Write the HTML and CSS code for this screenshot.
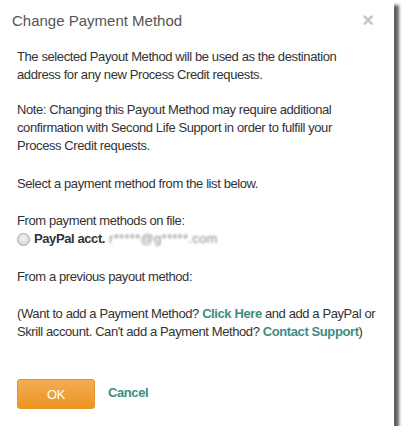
FILE: index.html
```html
<!DOCTYPE html>
<html>
<head>
<meta charset="utf-8">
<link rel="stylesheet" href="styles.css">
</head>
<body>
<div class="dialog">
  <div class="header">
    <div class="title">Change Payment Method</div>
    <div class="close">×</div>
  </div>
  <div class="content">
    <p class="p1">The selected Payout Method will be used as the destination address for any new Process Credit requests.</p>
    <p class="p2">Note: Changing this Payout Method may require additional confirmation with Second Life Support in order to fulfill your Process Credit requests.</p>
    <p class="p3">Select a payment method from the list below.</p>
    <div class="group">
      <div class="line">From payment methods on file:</div>
      <label class="option"><span class="radio"></span><b>PayPal acct.</b> <span class="blur">r*****@g*****.com</span></label>
    </div>
    <p class="p4">From a previous payout method:</p>
    <p class="p5">(Want to add a Payment Method? <a class="link">Click Here</a> and add a PayPal or Skrill account. Can't add a Payment Method? <a class="link">Contact Support</a>)</p>
  </div>
  <div class="footer">
    <div class="btn">OK</div>
    <a class="cancel">Cancel</a>
  </div>
</div>
</body>
</html>
```
FILE: styles.css
```css
html, body {
  margin: 0;
  padding: 0;
  background: #fff;
}
body {
  font-family: "Liberation Sans", Arial, sans-serif;
  color: #333;
}
.dialog {
  width: 394px;
  height: 426px;
  background: #fff;
  box-shadow: 5px 5px 3px rgba(0, 0, 0, 0.62);
  display: flex;
  flex-direction: column;
  box-sizing: border-box;
}
.header {
  display: flex;
  justify-content: space-between;
  align-items: flex-start;
  padding: 10px 20px 0 12px;
}
.title {
  font-size: 15px;
  line-height: 22px;
  color: #555;
}
.close {
  font-size: 20px;
  font-weight: bold;
  line-height: 22px;
  color: #c4c4c4;
  margin-top: -1px;
}
.content {
  padding: 16px 16px 0 17px;
  font-size: 13px;
  line-height: 18px;
  letter-spacing: -0.4px;
}
.content p {
  margin: 0;
}
.p1 {
  margin-bottom: 17px !important;
}
.p2 {
  margin-bottom: 20px !important;
}
.p3 {
  margin-bottom: 19px !important;
}
.group {
  margin-bottom: 20px;
}
.p4 {
  margin-bottom: 19px !important;
}
.option {
  display: flex;
  align-items: center;
  height: 18px;
}
.option b {
  font-weight: bold;
  margin-left: 4px;
  margin-right: 4px;
}
.radio {
  width: 11px;
  height: 11px;
  border-radius: 50%;
  border: 1px solid #a5a5a5;
  background: radial-gradient(circle at 50% 40%, #f4f4f4 0%, #dedede 60%, #cfcfcf 100%);
}
.blur {
  color: #8a8a8a;
  filter: blur(1.3px);
  font-size: 13px;
  letter-spacing: 0.3px;
}
.link {
  color: #3d8c80;
  font-weight: bold;
}
.footer {
  margin-top: auto;
  display: flex;
  align-items: center;
  padding: 0 0 17px 17px;
}
.btn {
  width: 78px;
  height: 30px;
  box-sizing: border-box;
  border: 1px solid #e5952a;
  border-radius: 3px;
  background: linear-gradient(#f3ac55, #ed9520);
  color: #fff;
  font-size: 13px;
  letter-spacing: -0.4px;
  display: flex;
  align-items: center;
  justify-content: center;
}
.cancel {
  margin-left: 13px;
  color: #3d8c80;
  font-weight: bold;
  font-size: 13px;
  letter-spacing: -0.4px;
  margin-top: -3px;
}
```
